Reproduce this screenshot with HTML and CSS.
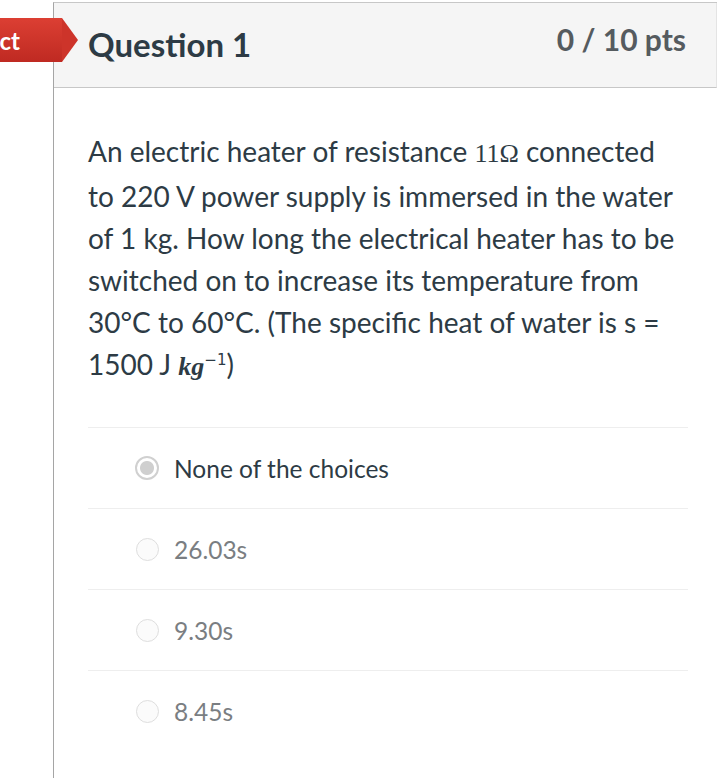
FILE: index.html
```html
<!DOCTYPE html>
<html>
<head>
<meta charset="utf-8">
<link rel="stylesheet" href="styles.css">
</head>
<body>
<div class="page">
  <div class="badge"><span class="badge-text">Incorrect</span></div>
  <div class="card">
    <div class="header">
      <h2 class="title">Question 1</h2>
      <span class="points">0 / 10 pts</span>
    </div>
    <div class="body">
      <p class="question">An electric heater of resistance <span class="math">11Ω</span> connected<br>to 220 V power supply is immersed in the water<br>of 1 kg. How long the electrical heater has to be<br>switched on to increase its temperature from<br>30°C to 60°C. (The specific heat of water is s =<br>1500 J <span class="math italic">kg</span><sup class="sup">−1</sup>)</p>
      <div class="answers">
        <div class="answer selected"><span class="radio"></span><span class="label">None of the choices</span></div>
        <div class="answer"><span class="radio"></span><span class="label">26.03s</span></div>
        <div class="answer"><span class="radio"></span><span class="label">9.30s</span></div>
        <div class="answer"><span class="radio"></span><span class="label">8.45s</span></div>
      </div>
    </div>
  </div>
</div>
</body>
</html>
```
FILE: styles.css
```css
html, body {
  margin: 0;
  padding: 0;
  background: #fff;
}
body {
  font-family: Lato, "Open Sans", sans-serif;
  color: #2d3b45;
}
.page {
  position: relative;
  padding-top: 2px;
  height: 776px;
  overflow: hidden;
}
.card {
  margin-left: 53px;
  width: 663px;
  border-left: 1px solid #a5a5a5;
  border-top: 1px solid #c7c7c7;
  height: 780px;
}
.header {
  display: flex;
  align-items: center;
  justify-content: space-between;
  height: 85px;
  background: #f5f5f5;
  border-bottom: 1px solid #c7c7c7;
  border-right: 1px solid #e4e4e4;
  padding: 0 30px 0 34px;
  box-sizing: border-box;
}
.title {
  margin: 0;
  font-size: 33px;
  font-weight: 700;
  color: #2d3b45;
  padding-bottom: 2px;
}
.points {
  font-size: 30px;
  font-weight: 700;
  color: #555b5f;
  padding-bottom: 12px;
}
.badge {
  position: absolute;
  left: 0;
  top: 18px;
  width: 62px;
  height: 44px;
  background: linear-gradient(#dc3f33, #bf2a22);
  display: flex;
  justify-content: flex-end;
  align-items: center;
  z-index: 2;
}
.badge::after {
  content: "";
  position: absolute;
  left: 62px;
  top: 0;
  border-top: 22px solid transparent;
  border-bottom: 22px solid transparent;
  border-left: 16px solid #cd342a;
}
.badge-text {
  color: #fff;
  font-weight: 700;
  font-size: 24px;
  white-space: nowrap;
  padding-right: 42px;
}
.body {
  padding: 0 28px 0 34px;
}
.question {
  margin: 0;
  padding-top: 42px;
  font-size: 28px;
  line-height: 42px;
  color: #2d3b45;
  white-space: nowrap;
}
.math {
  font-family: "Liberation Serif", "DejaVu Serif", serif;
  font-size: 26px;
  color: #2d3b45;
}
.italic {
  font-style: italic;
  font-weight: 700;
}
.sup {
  font-family: "DejaVu Sans", sans-serif;
  font-size: 15px;
  vertical-align: 10px;
  line-height: 0;
}
.answers {
  margin-top: 39px;
  width: 600px;
}
.answer {
  display: flex;
  align-items: center;
  height: 81px;
  border-top: 1px solid #eeeeee;
  box-sizing: border-box;
  padding-left: 48px;
  gap: 15px;
}
.radio {
  width: 23px;
  height: 23px;
  border-radius: 50%;
  border: 1px solid #dedede;
  background: #fbfbfb;
  box-sizing: border-box;
  flex: none;
}
.selected .radio {
  border: 2px solid #d0d0d0;
  background: radial-gradient(circle, #cfcfcf 0 6.5px, #fff 7.5px);
  width: 24px;
  height: 24px;
  margin-left: -1px;
}
.label {
  font-size: 24.5px;
  color: #7a7e82;
}
.selected .label {
  color: #2d3b45;
}
```
